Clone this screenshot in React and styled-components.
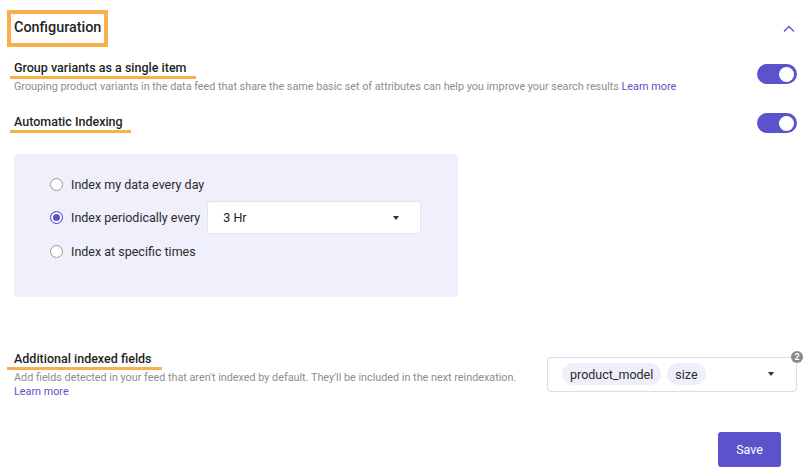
import React, { useState } from 'react';
import styled, { createGlobalStyle } from 'styled-components';

const purple = '#5b52cc';
const orange = '#f9b04c';

const GlobalStyle = createGlobalStyle`
  html, body {
    margin: 0;
    padding: 0;
    background: #ffffff;
  }
  body {
    font-family: Roboto, "Liberation Sans", sans-serif;
    color: #222222;
    -webkit-font-smoothing: antialiased;
  }
`;

const Page = styled.div`
  width: 811px;
  height: 475px;
  box-sizing: border-box;
  padding: 10px 14px 0 14px;
  display: flex;
  flex-direction: column;
`;

const Header = styled.div`
  display: flex;
  align-items: center;
  justify-content: space-between;
`;

const TitleBox = styled.div`
  margin-left: -7px;
  border: 4px solid ${orange};
  padding: 6px 3px 7px 3px;
  font-size: 14.4px;
  font-weight: 500;
  color: #1f1f1f;
  line-height: 16px;
`;

const Chevron = styled.button`
  display: flex;
  align-items: center;
  border: 0;
  background: none;
  padding: 0;
  margin-right: 2px;
  color: ${purple};
  cursor: pointer;
`;

const Row = styled.div`
  display: flex;
  align-items: center;
  justify-content: space-between;
  margin-top: ${props => props.$top || 0}px;
`;

const TextCol = styled.div`
  display: flex;
  flex-direction: column;
  flex: 1;
  min-width: 0;
`;

const Heading = styled.div`
  align-self: flex-start;
  margin-left: -${props => props.$left || 4}px;
  padding: 0 ${props => props.$right || 9}px 1px ${props => props.$left || 4}px;
  border-bottom: 3px solid ${orange};
  font-size: 12.5px;
  font-weight: 500;
  line-height: 15px;
  color: #1f1f1f;
`;

const Desc = styled.div`
  margin-top: 1px;
  font-size: 10.8px;
  line-height: 14px;
  color: #8d8d8d;
`;

const Link = styled.a`
  color: ${purple};
  text-decoration: none;
  cursor: pointer;
`;

const Track = styled.button`
  width: 40px;
  height: 20px;
  margin-top: ${props => props.$shift || 0}px;
  border-radius: 10px;
  border: 0;
  padding: 0 3px;
  display: flex;
  align-items: center;
  justify-content: ${props => (props.$on ? 'flex-end' : 'flex-start')};
  background: ${props => (props.$on ? purple : '#c7c7cf')};
  cursor: pointer;
  flex-shrink: 0;
`;

const Knob = styled.span`
  width: 15px;
  height: 15px;
  border-radius: 50%;
  background: #ffffff;
`;

const Panel = styled.div`
  margin-top: 21px;
  width: 444px;
  box-sizing: border-box;
  padding: 20px 36px 36px 36px;
  background: #f0effc;
  border-radius: 4px;
  display: flex;
  flex-direction: column;
  gap: 7px;
`;

const Option = styled.label`
  display: flex;
  align-items: center;
  gap: 8px;
  min-height: 20px;
  font-size: 12.5px;
  color: #2b2b2b;
  white-space: nowrap;
  cursor: pointer;
`;

const RadioDot = styled.span`
  width: 13px;
  height: 13px;
  box-sizing: border-box;
  border-radius: 50%;
  border: 1px solid ${props => (props.$checked ? purple : '#9a9a9a')};
  background: ${props => (props.$checked ? purple : '#ffffff')};
  box-shadow: ${props => (props.$checked ? 'inset 0 0 0 2px #ffffff' : 'none')};
  flex-shrink: 0;
`;

const Select = styled.div`
  margin-left: -1px;
  width: 214px;
  height: 33px;
  box-sizing: border-box;
  padding: 0 21px 0 15px;
  background: #ffffff;
  border: 1px solid #e4e3ee;
  border-radius: 3px;
  display: flex;
  align-items: center;
  justify-content: space-between;
  font-size: 12.5px;
  color: #222222;
`;

const Caret = styled.span`
  width: 0;
  height: 0;
  border-left: 3.5px solid transparent;
  border-right: 3.5px solid transparent;
  border-top: 4px solid #333333;
`;

const MultiWrap = styled.div`
  position: relative;
  width: 250px;
  margin-left: 28px;
  margin-top: -2px;
  flex-shrink: 0;
`;

const Multi = styled.div`
  height: 35px;
  box-sizing: border-box;
  padding: 0 22px 0 14px;
  border: 1px solid #dedde6;
  border-radius: 4px;
  display: flex;
  align-items: center;
  gap: 6px;
`;

const Chip = styled.span`
  height: 22px;
  padding: 0 8px;
  border-radius: 11px;
  background: #efeefb;
  display: flex;
  align-items: center;
  font-size: 12.5px;
  color: #2b2b2b;
`;

const Spacer = styled.span`
  flex: 1;
`;

const Badge = styled.span`
  position: absolute;
  top: -6px;
  right: -6px;
  width: 12px;
  height: 12px;
  border-radius: 50%;
  background: #8a8a8a;
  color: #ffffff;
  font-size: 9px;
  font-weight: 700;
  line-height: 12px;
  text-align: center;
`;

const Footer = styled.div`
  margin-top: 33px;
  display: flex;
  justify-content: flex-end;
  padding-right: 16px;
`;

const SaveButton = styled.button`
  width: 63px;
  height: 35px;
  border: 0;
  border-radius: 3px;
  background: ${purple};
  color: #ffffff;
  font-family: inherit;
  font-size: 12.5px;
  cursor: pointer;
`;

function Toggle({ on, onChange, shift }) {
  return (
    <Track $on={on} $shift={shift} onClick={() => onChange(!on)}>
      <Knob />
    </Track>
  );
}

const options = [
  { id: 'daily', label: 'Index my data every day' },
  { id: 'periodic', label: 'Index periodically every' },
  { id: 'specific', label: 'Index at specific times' },
];

export default function App() {
  const [grouping, setGrouping] = useState(true);
  const [autoIndex, setAutoIndex] = useState(true);
  const [mode, setMode] = useState('periodic');

  return (
    <>
      <GlobalStyle />
      <Page>
        <Header>
          <TitleBox>Configuration</TitleBox>
          <Chevron aria-label="Collapse">
            <svg width="12" height="8" viewBox="0 0 12 8" fill="none">
              <polyline points="1,6.5 6,1.5 11,6.5" stroke="currentColor" strokeWidth="1.3" />
            </svg>
          </Chevron>
        </Header>

        <Row $top={13}>
          <TextCol>
            <Heading>Group variants as a single item</Heading>
            <Desc>
              Grouping product variants in the data feed that share the same basic set of attributes can help you improve your search results <Link>Learn more</Link>
            </Desc>
          </TextCol>
          <Toggle on={grouping} onChange={setGrouping} shift={-6} />
        </Row>

        <Row $top={19}>
          <TextCol>
            <Heading $right={8}>Automatic Indexing</Heading>
          </TextCol>
          <Toggle on={autoIndex} onChange={setAutoIndex} />
        </Row>

        <Panel>
          {options.map(opt => (
            <Option key={opt.id} onClick={() => setMode(opt.id)}>
              <RadioDot $checked={mode === opt.id} />
              {opt.label}
              {opt.id === 'periodic' && (
                <Select>
                  3 Hr
                  <Caret />
                </Select>
              )}
            </Option>
          ))}
        </Panel>

        <Row $top={54}>
          <TextCol>
            <Heading $left={7} $right={10}>Additional indexed fields</Heading>
            <Desc>
              Add fields detected in your feed that aren't indexed by default. They'll be included in the next reindexation. <Link>Learn more</Link>
            </Desc>
          </TextCol>
          <MultiWrap>
            <Multi>
              <Chip>product_model</Chip>
              <Chip>size</Chip>
              <Spacer />
              <Caret />
            </Multi>
            <Badge>2</Badge>
          </MultiWrap>
        </Row>

        <Footer>
          <SaveButton>Save</SaveButton>
        </Footer>
      </Page>
    </>
  );
}
